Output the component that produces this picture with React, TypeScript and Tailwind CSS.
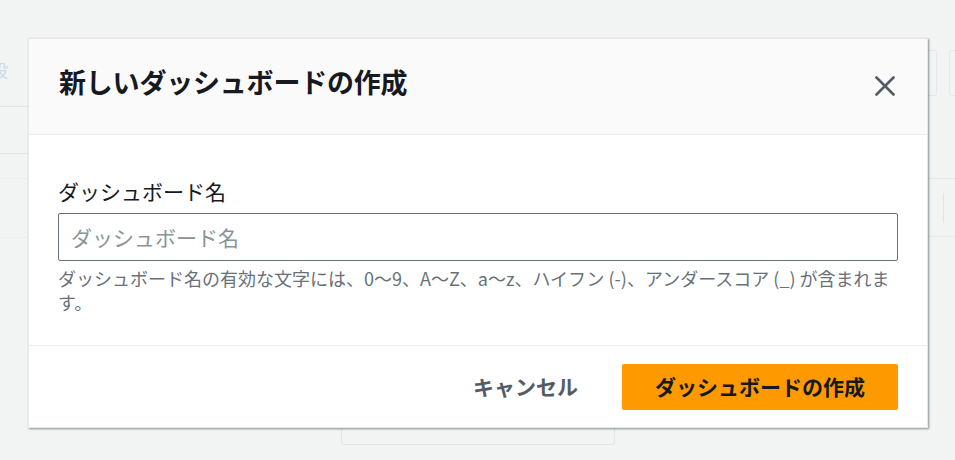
const font = "font-['Noto_Sans_CJK_JP','Noto_Sans',sans-serif]";

function CloseIcon() {
  return (
    <svg width="20" height="20" viewBox="0 0 20 20" fill="none" stroke="currentColor" strokeWidth="2.6" strokeLinecap="round">
      <path d="M1.5 1.5 L18.5 18.5 M18.5 1.5 L1.5 18.5" />
    </svg>
  );
}

// The console page that sits greyed out behind the dialog
function Backdrop() {
  return (
    <div className="grid h-full grid-cols-[40px_1fr_55px] bg-[#f2f3f3]">
      <div className="flex flex-col">
        <div className="h-[107px] overflow-hidden border-b border-[#e1e4e4] pt-[60px]">
          <span className="-ml-[9px] block text-[17px] leading-[20px] text-[#c9dbe6]">設</span>
        </div>
        <div className="h-[47px] border-b border-[#e1e4e4]" />
        <div className="h-[25px] border-b border-[#eceeee]" />
        <div className="h-[59px] border-b border-[#eceeee]" />
      </div>
      <div className="flex flex-col">
        <div className="ml-[301px] mt-[400px] h-[45px] w-[274px] rounded-[3px] border border-[#e1e4e4]" />
      </div>
      <div className="flex flex-col">
        <div className="flex gap-[12px] pt-[50px]">
          <div className="-ml-[10px] h-[46px] w-[47px] shrink-0 rounded-[3px] border border-[#e6e9e9]" />
          <div className="h-[46px] w-[40px] shrink-0 rounded-[3px] border border-[#e6e9e9]" />
        </div>
        <div className="mt-[82px] flex h-[59px] items-center border-y border-[#e6e9e9] pl-[43px]">
          <div className="h-[30px] w-px bg-[#e1e4e4]" />
        </div>
      </div>
    </div>
  );
}

function Dialog() {
  return (
    <div className="w-[900px] border border-[#e6e9e9] bg-white shadow-[1px_1px_2px_rgba(0,28,36,0.45)]">
      {/* Header */}
      <div className="flex h-[96px] items-start justify-between border-b border-[#eaeded] bg-[#fafafa] pl-[30px] pr-[32px]">
        <h2 className="mt-[25px] text-[27px] font-bold leading-[36px] tracking-[-0.2px] text-[#16191f]">
          新しいダッシュボードの作成
        </h2>
        <button className="mt-[37px] text-[#545b64]">
          <CloseIcon />
        </button>
      </div>

      {/* Body */}
      <div className="border-b border-[#eaeded] px-[29px] pb-[31px] pt-[42px]">
        <label className="block text-[21px] leading-[28px] text-[#16191f]">ダッシュボード名</label>
        <input
          className="mt-[8px] block h-[48px] w-[840px] rounded-[2px] border border-[#687078] px-[12px] text-[21px] text-[#16191f] outline-none placeholder:text-[#879596]"
          placeholder="ダッシュボード名"
        />
        <p className="mt-[5px] text-[18px] leading-[24px] text-[#687078]">
          ダッシュボード名の有効な文字には、0〜9、A〜Z、a〜z、ハイフン (-)、アンダースコア (_) が含まれます。
        </p>
      </div>

      {/* Footer */}
      <div className="flex items-center justify-end gap-[44px] pb-[17px] pl-[30px] pr-[29px] pt-[18px]">
        <button className="text-[21px] font-bold text-[#545b64]">キャンセル</button>
        <button className="h-[46px] w-[276px] rounded-[2px] bg-[#ff9900] text-[21px] font-bold text-[#16191f]">
          ダッシュボードの作成
        </button>
      </div>
    </div>
  );
}

export default function App() {
  return (
    <div className={`relative h-[460px] w-[955px] overflow-hidden ${font}`}>
      <Backdrop />
      {/* modal overlay */}
      <div className="absolute inset-0 px-[28px] pt-[38px]">
        <Dialog />
      </div>
    </div>
  );
}
